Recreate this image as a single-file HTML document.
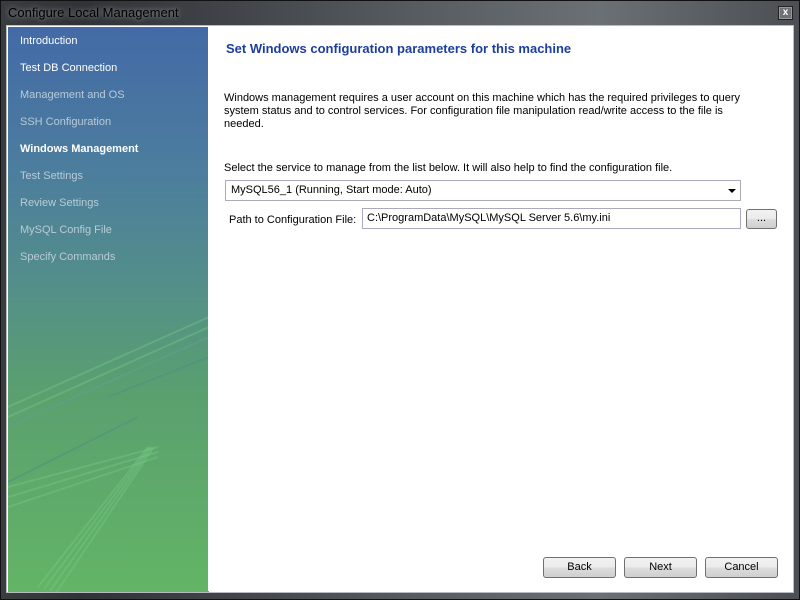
<!DOCTYPE html>
<html><head><style>
*{margin:0;padding:0;box-sizing:border-box}
body{width:800px;height:600px;overflow:hidden;background:#2e3134;font-family:"Liberation Sans",sans-serif;font-size:11px;position:relative}
#frame{position:absolute;left:0;top:0;width:800px;height:600px;background:linear-gradient(90deg,#3a3d40 0%,#2f3236 10%,#555a5e 50%,#6b7074 75%,#4b4f53 100%);border:1px solid #111}
#title{position:absolute;left:8px;top:5px;font-size:13px;color:#000;text-shadow:0 0 6px rgba(255,255,255,.6)}
#close{position:absolute;left:778px;top:6px;width:15px;height:14px;border:1px solid #222;background:#6d7276;color:#fff;font-size:10px;font-weight:bold;text-align:center;line-height:12px;box-shadow:inset 0 0 0 1px #999}
#content{position:absolute;left:6px;top:25px;width:788px;height:568px;border:1px solid #b8bcc0;background:#fff}
#side{position:absolute;left:1px;top:1px;width:201px;height:565px;background:linear-gradient(180deg,#436aa6 0%,#4c7d9e 25%,#538e8a 45%,#5aa06f 65%,#63b466 100%);overflow:hidden}
#side div.i{position:absolute;left:12px;color:#b9cbd6;font-size:11px}
#side div.a{color:#fff}
#side div.b{color:#fff;font-weight:bold}
#main{position:absolute;left:201px;top:1px;right:1px;bottom:1px;background:#fff}
h1{position:absolute;left:18px;top:14px;font-size:13px;color:#1d3e9c;font-weight:bold}
.t{position:absolute;color:#000;font-size:11px;line-height:13px}
.combo{position:absolute;left:17px;top:153px;width:516px;height:21px;border:1px solid #aab;background:#fff;padding:3px 5px}
.arr{position:absolute;right:4px;top:8px;width:0;height:0;border-left:4px solid transparent;border-right:4px solid transparent;border-top:4px solid #000}
.inp{position:absolute;left:154px;top:181px;width:379px;height:21px;border:1px solid #aab;background:#fff;padding:3px 4px}
.btn{position:absolute;height:21px;border:1px solid #707070;border-radius:3px;background:linear-gradient(#f2f2f2 0%,#ebebeb 50%,#dddddd 51%,#cfcfcf 100%);text-align:center;line-height:19px;color:#000}
</style></head><body>
<div id="frame"></div>
<div id="title">Configure Local Management</div>
<div id="close">x</div>
<div id="content">
<div id="side">
<svg width="201" height="565" style="position:absolute;left:0;top:0" >
<g stroke="#7ccf8a" stroke-opacity=".35" stroke-width="2" fill="none">
<line x1="0" y1="380" x2="201" y2="290"/><line x1="0" y1="390" x2="201" y2="300"/><line x1="0" y1="400" x2="201" y2="310"/>
<line x1="0" y1="460" x2="150" y2="420"/><line x1="0" y1="470" x2="150" y2="425"/><line x1="0" y1="480" x2="150" y2="430"/>
<line x1="30" y1="560" x2="140" y2="420"/><line x1="36" y1="562" x2="142" y2="420"/><line x1="42" y1="564" x2="144" y2="420"/><line x1="48" y1="566" x2="146" y2="420"/>
</g>
<g stroke="#4d8a8a" stroke-opacity=".4" stroke-width="2" fill="none">
<line x1="0" y1="400" x2="201" y2="310"/><line x1="100" y1="370" x2="201" y2="330"/><line x1="0" y1="455" x2="130" y2="390"/>
</g>
</svg>
<div class="i a" style="top:8px">Introduction</div>
<div class="i a" style="top:35px">Test DB Connection</div>
<div class="i" style="top:62px">Management and OS</div>
<div class="i" style="top:89px">SSH Configuration</div>
<div class="i b" style="top:116px">Windows Management</div>
<div class="i" style="top:143px">Test Settings</div>
<div class="i" style="top:170px">Review Settings</div>
<div class="i" style="top:197px">MySQL Config File</div>
<div class="i" style="top:224px">Specify Commands</div>
</div>
<div id="main">
<h1>Set Windows configuration parameters for this machine</h1>
<div class="t" style="left:16px;top:65px;width:540px">Windows management requires a user account on this machine which has the required privileges to query system status and to control services. For configuration file manipulation read/write access to the file is needed.</div>
<div class="t" style="left:16px;top:135px">Select the service to manage from the list below. It will also help to find the configuration file.</div>
<div class="combo">MySQL56_1 (Running, Start mode: Auto)<div class="arr"></div></div>
<div class="t" style="left:21px;top:187px">Path to Configuration File:</div>
<div class="inp">C:\ProgramData\MySQL\MySQL Server 5.6\my.ini</div>
<div class="btn" style="left:538px;top:182px;width:31px;height:20px;line-height:16px">...</div>
<div class="btn" style="left:335px;top:530px;width:73px">Back</div>
<div class="btn" style="left:416px;top:530px;width:73px">Next</div>
<div class="btn" style="left:497px;top:530px;width:73px">Cancel</div>
</div>
</div>
</body></html>
